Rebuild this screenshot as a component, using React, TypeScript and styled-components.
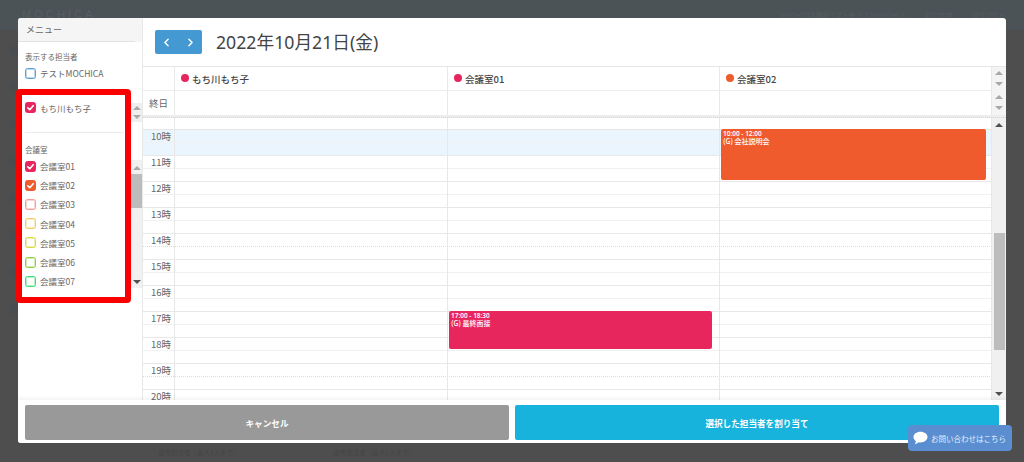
import React from "react";
import styled, { createGlobalStyle } from "styled-components";
import { ChevronLeft, ChevronRight } from "lucide-react";

const Global = createGlobalStyle`
  html, body { margin: 0; padding: 0; height: 462px; overflow: hidden; background: #4e4e4e; }
  body { font-family: "Noto Sans CJK JP", "Noto Sans", sans-serif; }
  * { box-sizing: border-box; }
`;

const Page = styled.div`
  position: relative; width: 1024px; height: 462px; overflow: hidden; background: #4e4e4e;
  display: flex; flex-direction: column;
`;
const TopBar = styled.div`
  height: 30px; flex: none; background: #4b5357; padding: 8px 19px 0 22px; color: #565e61;
  display: flex; justify-content: space-between; line-height: 11px;
`;
const Logo = styled.span`
  font: 11px "Liberation Sans", sans-serif; letter-spacing: 3.1px;
`;
const TopRight = styled.span`
  font-size: 6.5px; padding-top: 2px; display: flex; gap: 20px;
`;
const Middle = styled.div`
  flex: 1; display: flex; flex-direction: column; gap: 27px; padding: 15px 0 0 9px;
`;
const RailDot = styled.span`
  width: 10px; height: 10px; border-radius: 50%; background: #484d50;
`;
const Bottom = styled.div`
  height: 18px; flex: none; display: flex; gap: 94px; padding: 3px 0 0 158px; font-size: 6.5px; color: #454545;
`;
const Modal = styled.div`
  position: absolute; left: 18px; top: 18px; width: 988px; height: 425px;
  background: #fff; border-radius: 3px; display: flex; flex-direction: column; overflow: hidden;
`;
const Body = styled.div`
  display: flex; height: 382px;
`;
const Sidebar = styled.aside`
  width: 125px; flex: none; border-right: 1px solid #e8e8e8; display: flex; flex-direction: column;
`;
const SideHead = styled.div`
  height: 24px; background: #f5f5f5; border-bottom: 1px solid #e2e2e2; padding-left: 8px;
  font-size: 9px; line-height: 23px; color: #666; margin-right: 7px;
  box-shadow: 7px 0 0 #f5f5f5;
`;
const GroupTitle = styled.div`
  font-size: 7.5px; height: 12.500px; line-height: 12px; color: #666; padding-left: 7px;
`;
const Staff = styled.div`
  padding-top: 9px; height: 56px;
`;
const ScrollRow = styled.div<{ $h: number }>`
  display: flex; height: ${(p) => p.$h}px;
`;
const ScrollContent = styled.div`
  flex: 1; min-width: 0;
`;
const MiniBar = styled.div`
  width: 11px; height: 19px; margin-top: 5px; flex: none; background: #efefef; display: flex; flex-direction: column;
  justify-content: space-between; align-items: center; padding: 3px 0;
`;
const MiniTrack = styled.div`
  width: 11px; height: 128px; margin-top: 16px; flex: none; background: #f1f1f1; display: flex; flex-direction: column; align-items: center;
`;
const Thumb = styled.div<{ $h: number }>`
  width: 100%; height: ${(p) => p.$h}px; background: #bcbcbc; flex: none;
`;
const Arrow = styled.i<{ $up?: boolean; $dark?: boolean }>`
  display: block; width: 0; height: 0; flex: none; border-left: 4px solid transparent; border-right: 4px solid transparent;
  ${(p) => (p.$up ? "border-bottom" : "border-top")}: 4px solid ${(p) => (p.$dark ? "#505050" : "#a8a8a8")};
`;
const CheckRow = styled.div`
  display: flex; align-items: center; height: 19.2px; padding-left: 7px; gap: 4px;
  font-size: 8.5px; color: #666; white-space: nowrap;
`;
const Box = styled.span<{ $c: string; $on?: boolean }>`
  width: 11px; height: 11px; border-radius: 2.5px; flex: none; display: flex; align-items: center; justify-content: center;
  border: 1px solid ${(p) => p.$c}; background: ${(p) => (p.$on ? p.$c : "#fff")};
  box-shadow: inset 0 0 0 1px ${(p) => p.$c}66;
`;
const Divider = styled.div`
  height: 1px; background: #eaeaea; margin: 15px 7px 0 7px;
`;
const Main = styled.main`
  flex: 1; min-width: 0; display: flex; flex-direction: column;
`;
const Toolbar = styled.div`
  height: 48px; flex: none; display: flex; align-items: center; padding: 0 0 0 12px; gap: 14px;
`;
const NavGroup = styled.div`
  display: flex; width: 47px; height: 24px; background: #4599d2; border-radius: 2px; color: #fff;
`;
const NavBtn = styled.button`
  flex: 1; border: 0; padding: 0; background: transparent; color: #fff; display: flex; align-items: center; justify-content: center;
`;
const DateTitle = styled.h1`
  margin: 0; font-size: 17.700px; font-weight: 400; color: #444; line-height: 24px;
  font-family: "Noto Sans", "Noto Sans CJK JP", sans-serif;
`;
const Cal = styled.div`
  flex: 1; min-height: 0; display: flex; flex-direction: column; border-top: 1px solid #e6e6e6; position: relative;
`;
const Columns = styled.div`
  display: grid; grid-template-columns: 32px 273px 272px 272px 14px;
`;
const HeadCell = styled.div`
  height: 24px; border-right: 1px solid #e8e8e8; border-bottom: 1px solid #ececec; display: flex; align-items: center;
  padding-left: 5.500px; gap: 3px; font-size: 9.5px; font-weight: 500; color: #444; white-space: nowrap;
`;
const Dot = styled.span<{ $c: string }>`
  width: 8.500px; height: 8.500px; border-radius: 50%; background: ${(p) => p.$c}; flex: none; margin-top: -1px;
`;
const AllDayLabel = styled.div`
  height: 24px; border-right: 1px solid #e8e8e8; font-size: 9.5px; color: #666; display: flex; align-items: center; justify-content: center;
`;
const AllDayCell = styled.div`
  height: 24px; border-right: 1px solid #e8e8e8;
`;
const BarCell = styled.div`
  height: 24px; background: #f4f4f4; display: flex; flex-direction: column; align-items: center;
  justify-content: space-between; padding: 4px 0 5px;
`;
const Sep = styled.div`
  height: 3px; background: #ededed; border-bottom: 1px dotted #d4d4d4; flex: none;
`;
const TimeArea = styled.div`
  flex: 1; min-height: 0; overflow: hidden; display: flex;
`;
const Grid = styled.div`
  flex: 1; position: relative; overflow: hidden;
`;
const Row = styled.div<{ $line: string; $hi?: boolean; $h?: number }>`
  height: ${(p) => p.$h ?? 13}px; display: grid; grid-template-columns: 32px 273px 272px 272px;
  background: ${(p) => (p.$hi ? "#ebf5fd" : "transparent")};
  border-bottom: 1px ${(p) => p.$line};
`;
const Gutter = styled.div`
  border-right: 1px solid #e8e8e8; font-size: 9.5px; line-height: 13px; color: #666; text-align: right; padding-right: 3px; white-space: nowrap;
`;
const Track = styled.div`
  border-right: 1px solid #e8e8e8;
`;
const Event = styled.div<{ $c: string; $left: number; $top: number; $w: number; $h: number }>`
  position: absolute; left: ${(p) => p.$left}px; top: ${(p) => p.$top}px; width: ${(p) => p.$w}px; height: ${(p) => p.$h}px;
  background: ${(p) => p.$c}; border-radius: 2px; color: #fff; padding: 1px 2px;
`;
const EventTime = styled.div`
  font-family: "Noto Sans", sans-serif; font-size: 6.5px; font-weight: 600; line-height: 7px;
`;
const EventTitle = styled.div`
  font-size: 7px; line-height: 8px; font-weight: 500;
`;
const ScrollTrack = styled.div`
  width: 14px; flex: none; background: #f0f0f0; display: flex; flex-direction: column; align-items: center; padding-top: 5px;
`;
const Spacer = styled.div<{ $h: number }>`
  height: ${(p) => p.$h}px; flex: none;
`;
const MainThumb = styled.div`
  width: 11px; height: 117px; background: #bdbdbd; flex: none;
`;
const Footer = styled.div`
  height: 43px; flex: none; display: flex; gap: 6px; padding: 5px 7px 3px; background: #fff; box-shadow: 0 -2px 3px rgba(0,0,0,0.05); position: relative;
`;
const FootBtn = styled.button<{ $c: string }>`
  flex: 1; height: 35px; border: 0; border-radius: 2px; background: ${(p) => p.$c}; color: #fff; font-size: 8.6px; font-weight: 700;
  font-family: inherit;
`;
const RedFrame = styled.div`
  position: absolute; left: 16px; top: 89px; width: 115px; height: 214px; border: 6px solid #fb0000; border-radius: 4px;
`;
const Help = styled.div`
  position: absolute; left: 908px; top: 425px; width: 104px; height: 26px; background: #5a8ed0; border-radius: 4px;
  display: flex; align-items: center; padding-left: 5px; gap: 3px; color: #e6eefa; font-size: 7.5px; white-space: nowrap;
`;

const Check = () => (
  <svg width="9" height="9" viewBox="0 0 10 10" fill="none" stroke="#fff" strokeWidth="1.8" strokeLinecap="round" strokeLinejoin="round">
    <path d="M2 5.4 L4.2 7.4 L8 3" />
  </svg>
);
const Chat = () => (
  <svg width="15" height="14" viewBox="0 0 16 15" fill="#fff">
    <path d="M8 .8c4.2 0 7.5 2.500 7.5 5.7S12.200 12.200 8 12.200c-.8 0-1.500-.1-2.200-.2C4.800 13 3.500 13.800 1.800 14c.7-.8 1.200-1.800 1.300-3C1.500 9.900.5 8.300.5 6.500.5 3.300 3.800.8 8 .8z" />
  </svg>
);

const PINK = "#e8265e";
const ORANGE = "#ef5b2c";
const rooms: [string, string, boolean][] = [
  ["会議室01", PINK, true],
  ["会議室02", ORANGE, true],
  ["会議室03", "#f59a94", false],
  ["会議室04", "#f3cd63", false],
  ["会議室05", "#d8d83f", false],
  ["会議室06", "#8fcf3f", false],
  ["会議室07", "#3fdc78", false],
];
const hours = [10, 11, 12, 13, 14, 15, 16, 17, 18, 19, 20];
const rail = [0, 1, 2, 3, 4, 5, 6, 7];

export default function App() {
  return (
    <Page>
      <Global />
      <TopBar>
        <Logo>MOCHICA</Logo>
        <TopRight>
          <span>MOCHICA事務局テスト様 テストMOCHICA</span>
          <span>2023年卒</span>
          <span>ログアウト</span>
        </TopRight>
      </TopBar>
      <Middle>
        {rail.map((r) => (
          <RailDot key={r} />
        ))}
      </Middle>
      <Bottom>
        <span>選考担当者（最大1人まで）</span>
        <span>選考担当者（最大1人まで）</span>
      </Bottom>
      <Modal>
        <Body>
          <Sidebar>
            <SideHead>メニュー</SideHead>
            <Staff>
              <GroupTitle>表示する担当者</GroupTitle>
              <CheckRow>
                <Box $c="#5b9fd0" />
                テストMOCHICA
              </CheckRow>
            </Staff>
            <ScrollRow $h={46}>
              <ScrollContent>
                <CheckRow>
                  <Box $c={PINK} $on><Check /></Box>
                  もち川もち子
                </CheckRow>
                <Divider />
              </ScrollContent>
              <MiniBar>
                <Arrow $up />
                <Arrow />
              </MiniBar>
            </ScrollRow>
            <ScrollRow $h={155}>
              <ScrollContent>
                <GroupTitle>会議室</GroupTitle>
                {rooms.map(([n, c, on]) => (
                  <CheckRow key={n}>
                    <Box $c={c} $on={on}>{on && <Check />}</Box>
                    {n}
                  </CheckRow>
                ))}
              </ScrollContent>
              <MiniTrack>
                <Spacer $h={6} />
                <Arrow $up />
                <Spacer $h={4} />
                <Thumb $h={34} />
                <Spacer $h={72} />
                <Arrow $dark />
              </MiniTrack>
            </ScrollRow>
          </Sidebar>
          <Main>
            <Toolbar>
              <NavGroup>
                <NavBtn aria-label="前"><ChevronLeft size={13} strokeWidth={2.5} /></NavBtn>
                <NavBtn aria-label="次"><ChevronRight size={13} strokeWidth={2.5} /></NavBtn>
              </NavGroup>
              <DateTitle>2022年10月21日(金)</DateTitle>
            </Toolbar>
            <Cal>
              <Columns>
                <HeadCell />
                <HeadCell><Dot $c={PINK} />もち川もち子</HeadCell>
                <HeadCell><Dot $c={PINK} />会議室01</HeadCell>
                <HeadCell><Dot $c={ORANGE} />会議室02</HeadCell>
                <BarCell><Arrow $up /><Arrow /></BarCell>
                <AllDayLabel>終日</AllDayLabel>
                <AllDayCell />
                <AllDayCell />
                <AllDayCell />
                <BarCell><Arrow $up /><Arrow /></BarCell>
              </Columns>
              <Sep />
              <TimeArea>
                <Grid>
                  <Row $line="solid #e6e6e6" $h={12}>
                    <Gutter /><Track /><Track /><Track />
                  </Row>
                  {hours.map((h, i) => (
                    <React.Fragment key={h}>
                      <Row $line={h === 14 || h === 19 ? "dotted #dcdcdc" : "solid #f1f1f1"} $hi={i === 0}>
                        <Gutter>{h}時</Gutter><Track /><Track /><Track />
                      </Row>
                      <Row $line="solid #e8e8e8" $hi={i === 0}>
                        <Gutter /><Track /><Track /><Track />
                      </Row>
                    </React.Fragment>
                  ))}
                  <Event $c={ORANGE} $left={578} $top={11} $w={265} $h={51}>
                    <EventTime>10:00 - 12:00</EventTime>
                    <EventTitle>(G) 会社説明会</EventTitle>
                  </Event>
                  <Event $c={PINK} $left={306} $top={193} $w={263} $h={38}>
                    <EventTime>17:00 - 18:30</EventTime>
                    <EventTitle>(G) 最終面接</EventTitle>
                  </Event>
                </Grid>
                <ScrollTrack>
                  <Arrow $up $dark />
                  <Spacer $h={106} />
                  <MainThumb />
                  <Spacer $h={42} />
                  <Arrow $dark />
                </ScrollTrack>
              </TimeArea>
            </Cal>
          </Main>
        </Body>
        <Footer>
          <FootBtn $c="#999999">キャンセル</FootBtn>
          <FootBtn $c="#17b3dc">選択した担当者を割り当て</FootBtn>
        </Footer>
      </Modal>
      <RedFrame />
      <Help><Chat />お問い合わせはこちら</Help>
    </Page>
  );
}
